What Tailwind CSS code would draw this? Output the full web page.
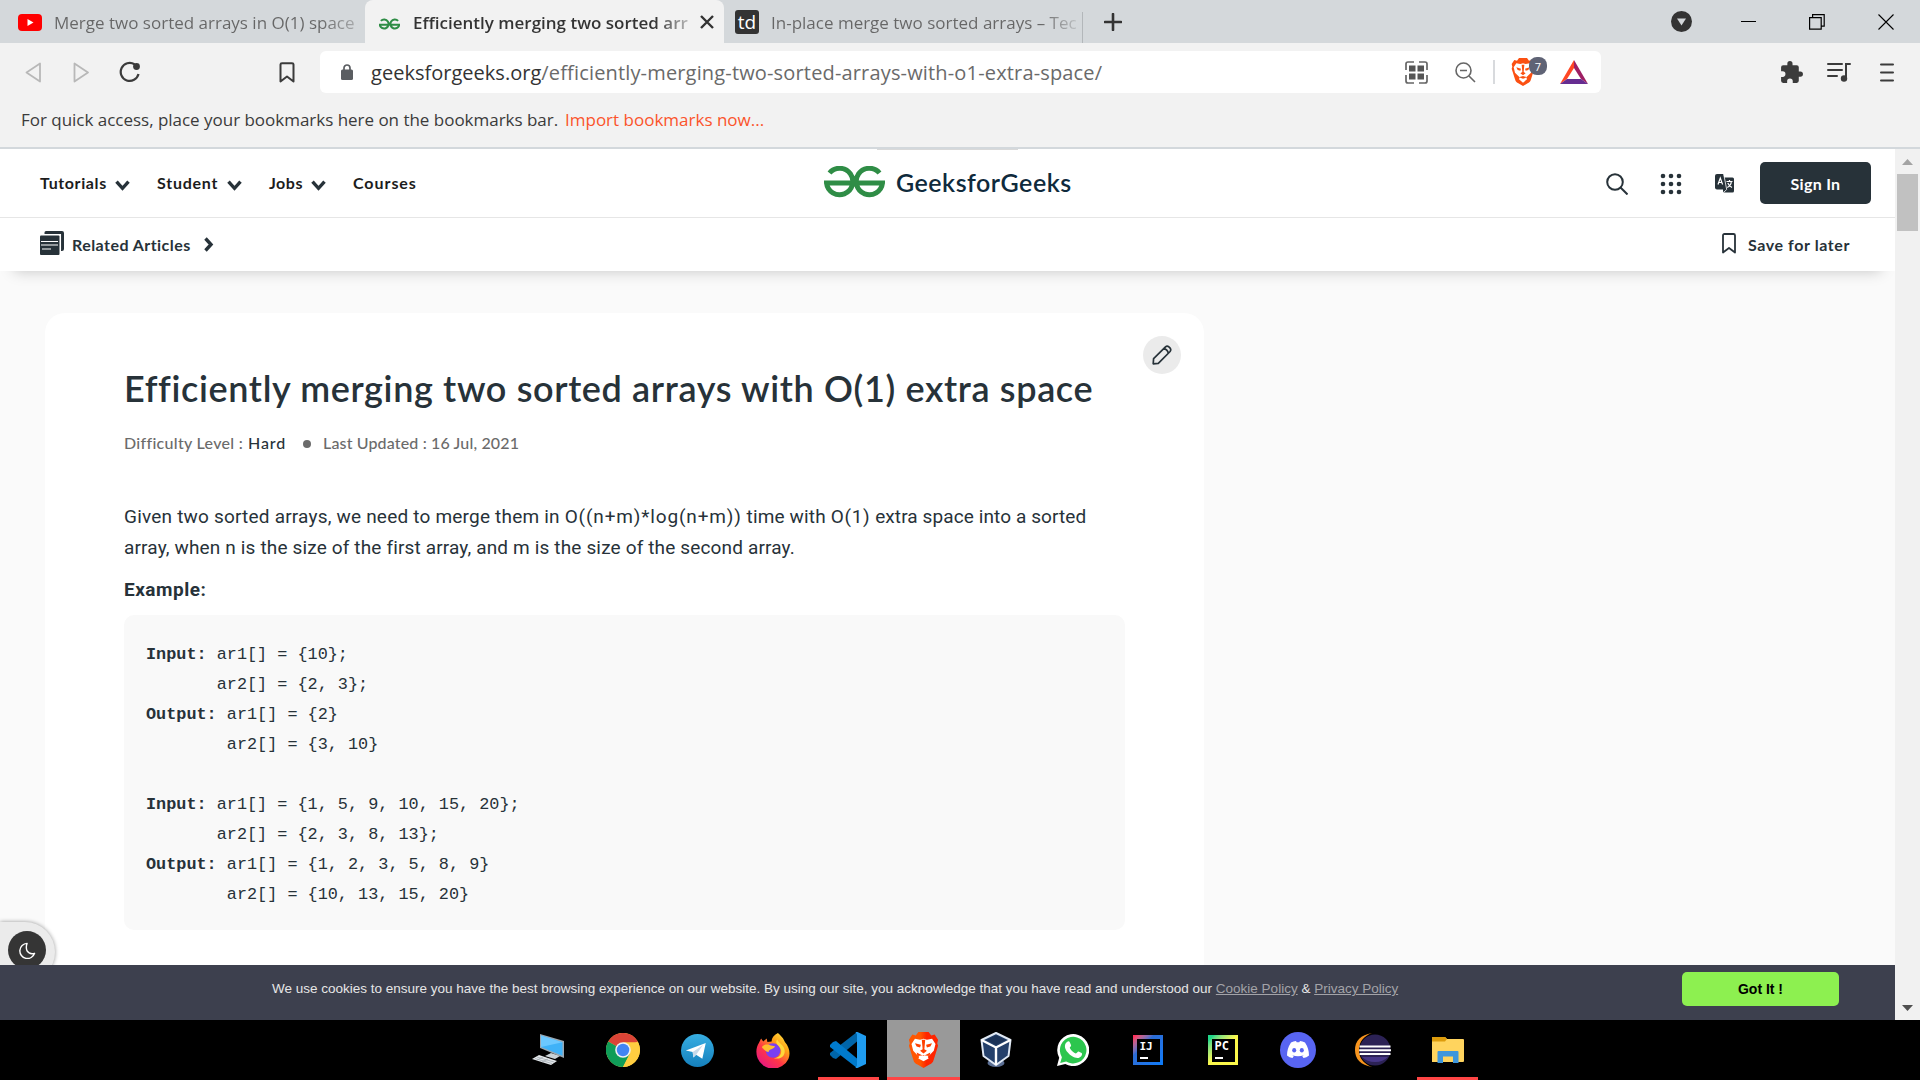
<!DOCTYPE html>
<html lang="en">
<head>
<meta charset="utf-8">
<title>Efficiently merging two sorted arrays with O(1) extra space</title>
<script src="https://cdn.jsdelivr.net/npm/@tailwindcss/browser@4"></script>
</head>
<body class="flex h-[1080px] w-[1920px] flex-col overflow-hidden bg-[#fafafa] font-['Open_Sans',sans-serif]">

<!-- Tab strip -->
<div class="flex h-[43px] shrink-0 bg-[#d4d8db] text-[17px] leading-[43px] whitespace-nowrap">
  <div class="flex h-11 w-[365px] items-center pl-[18px]">
    <svg class="h-[17px] w-6 shrink-0" viewBox="0 0 24 17"><rect width="24" height="17" rx="4" fill="#f00"/><path d="M9.500 5v7l6-3.500z" fill="#fff"/></svg>
    <span class="ml-3 w-[302px] overflow-hidden bg-linear-to-r from-[#666] from-88% to-[#666]/40 bg-clip-text text-transparent">Merge two sorted arrays in O(1) space</span>
  </div>
  <div class="flex h-11 w-[359px] items-center rounded-t-lg bg-[#f2f2f2] pl-[14px]">
    <svg class="mt-[3px] h-3 w-[21px] shrink-0" viewBox="0 0 61 32" fill="none" stroke="#2f8d46" stroke-width="6"><path d="M55.500 7A13 13 0 1 0 59 18H31M5.500 7A13 13 0 1 1 2 18H30"/></svg>
    <span class="ml-[13px] w-[275px] overflow-hidden bg-linear-to-r from-[#333] from-88% to-[#333]/30 bg-clip-text font-semibold text-transparent">Efficiently merging two sorted arr</span>
    <svg class="ml-3 size-[14px]" viewBox="0 0 14 14" stroke="#333" stroke-width="2.400"><path d="M1 1l12 12M13 1L1 13"/></svg>
  </div>
  <div class="flex h-11 w-[359px] items-center pl-[11px]">
    <span class="flex h-6 w-6 items-center justify-center rounded-[3px] bg-[#333] text-[19px] leading-6 text-white">td</span>
    <span class="ml-3 w-[306px] overflow-hidden bg-linear-to-r from-[#666] from-88% to-[#666]/20 bg-clip-text text-transparent">In-place merge two sorted arrays – Tec</span>
    <span class="ml-[5px] h-8 w-px self-end bg-[#b3b7ba]"></span>
  </div>
  <div class="flex flex-1 items-center pl-[21px]">
    <svg class="mt-px size-[18px]" viewBox="0 0 18 18" stroke="#333" stroke-width="2.600" stroke-linecap="round"><path d="M9 1v16M1 9h16"/></svg>
    <svg class="ml-[549px] size-[21px]" viewBox="0 0 21 21"><circle cx="10.500" cy="10.500" r="10.500" fill="#333"/><path d="M6 7.500h9l-4.500 7z" fill="#d4d8db"/></svg>
    <svg class="ml-[49px] size-[15px]" viewBox="0 0 15 15" stroke="#000"><path d="M0 7.500h15"/></svg>
    <svg class="ml-[53px] size-4" viewBox="0 0 16 16" fill="none" stroke="#000" stroke-width="1.200"><path d="M.6 3.600h11.600v11.600H.6zM3.600 3.600V.6h11.600v11.600h-3"/></svg>
    <svg class="ml-[53px] size-4" viewBox="0 0 16 16" stroke="#000" stroke-width="1.100"><path d="M.5.5l15 15M15.500.5l-15 15"/></svg>
  </div>
</div>

<!-- Toolbar -->
<div class="flex h-[58px] shrink-0 items-center bg-[#f2f2f2] pl-[25px]">
  <svg class="h-[21px] w-4" viewBox="0 0 16 21" fill="none" stroke="#b8b8b8" stroke-width="1.800" stroke-linejoin="round"><path d="M15 1.500v18L1.500 10.500z"/></svg>
  <svg class="ml-8 h-[21px] w-4" viewBox="0 0 16 21" fill="none" stroke="#b8b8b8" stroke-width="1.800" stroke-linejoin="round"><path d="M1.500 1.500v18L15 10.500z"/></svg>
  <svg class="ml-[30px] size-[22px]" viewBox="0 0 22 22" fill="none" stroke="#3b3b3b" stroke-width="2.200"><path d="M15.500 3.300A9 9 0 1 0 19.500 13"/><circle cx="17.500" cy="5.500" r="3.400" fill="#3b3b3b" stroke="none"/></svg>
  <svg class="ml-[138px] h-[21px] w-4" viewBox="0 0 16 21" fill="none" stroke="#3b3b3b" stroke-width="2" stroke-linejoin="round"><path d="M1.500 2.500Q1.500 1.200 3 1.200h10q1.500 0 1.500 1.300v17L8 14.500l-6.500 5z"/></svg>
  <div class="ml-[25px] flex h-[42px] w-[1281px] items-center rounded-md bg-white pl-[21px]">
    <svg class="h-4 w-3" viewBox="0 0 12 16" fill="none"><path d="M3 7V4a3 3 0 0 1 6 0v3" stroke="#5a5d61" stroke-width="1.700"/><rect y="5.500" width="12" height="10.500" rx="1.500" fill="#5a5d61"/></svg>
    <span class="mt-0.5 ml-[18px] w-[732px] text-[20px] leading-none tracking-[0.16px] whitespace-nowrap text-[#6a6a6a]"><span class="tracking-[0.02px] text-[#333]">geeksforgeeks.org</span>/efficiently-merging-two-sorted-arrays-with-o1-extra-space/</span>
    <svg class="ml-[302px] size-[23px]" viewBox="0 0 23 23" fill="none" stroke="#666" stroke-width="1.700"><path d="M1 9V3q0-2 2-2h6M14 1h6q2 0 2 2v6M22 14v6q0 2-2 2h-6M9 22H3q-2 0-2-2v-6"/><path d="M4 4.500h6.500v6H4zM12.500 4.500H19v6h-6.500zM4 12.500h6.500v6H4zM12.500 12.500H19v6h-6.500z" fill="#555" stroke="none"/></svg>
    <svg class="ml-[27px] size-[21px]" viewBox="0 0 21 21" fill="none" stroke="#666" stroke-width="1.600"><circle cx="8.500" cy="8.500" r="7.500"/><path d="M14 14l6 6M5 8.500h7"/></svg>
    <span class="ml-[17px] h-6 w-0.5 bg-[#d8dadd]"></span>
    <div class="relative ml-4 h-7 w-6">
      <svg class="h-7 w-6" viewBox="0 0 36 42"><path d="M9 4l3-4h12l3 4 4-1 4 6-1 4 1 3-5 16c-1 4-3 5-5 6l-7 4-7-4c-2-1-4-2-5-6L1 16l1-3-1-4 4-6z" fill="#fb5012"/><path d="M8 8l6 1 4-1 4 1 6-1 4 6-2 8-5 5-2 2 1 3-6 5-6-5 1-3-2-2-5-5-2-8z" fill="#fff"/><path d="M8 14l7 2-1 3-4-1zM28 14l-7 2 1 3 4-1zM16 10h4l-1 11 3 2-4 3-4-3 3-2zM12 29l6-2 6 2-6 2z" fill="#fb5012"/></svg>
      <span class="absolute -top-px left-[18px] flex h-[18px] w-[18px] items-center justify-center rounded-lg bg-[#5f6375] text-[11px] leading-none text-white">7</span>
    </div>
    <svg class="ml-[25px] h-6 w-7" viewBox="0 0 28 24"><path d="M14 0L0 24l7-5 7-11z" fill="#ff4724"/><path d="M14 0l14 24-7-5-7-11z" fill="#9e1f63"/><path d="M0 24h28l-7-5H7z" fill="#662d91"/></svg>
  </div>
  <svg class="ml-[178px] size-[25px]" viewBox="0 0 24 24" fill="#3b3b3b"><path d="M20.500 11H19V7a2 2 0 0 0-2-2h-4V3.500a2.500 2.500 0 0 0-5 0V5H4a2 2 0 0 0-2 2v3.800h1.500a2.700 2.700 0 0 1 0 5.400H2V20a2 2 0 0 0 2 2h3.800v-1.500a2.700 2.700 0 0 1 5.400 0V22H17a2 2 0 0 0 2-2v-4h1.500a2.500 2.500 0 0 0 0-5z"/></svg>
  <svg class="ml-[23px] h-5 w-6" viewBox="0 0 24 20" fill="none" stroke="#3b3b3b" stroke-width="2" stroke-linecap="round"><path d="M1 2h14M1 8h14M1 14h9M19 16V2h4"/><circle cx="17" cy="16.500" r="3.200" fill="#3b3b3b" stroke="none"/></svg>
  <svg class="ml-[29px] h-[19px] w-3.5" viewBox="0 0 14 19" stroke="#3b3b3b" stroke-width="2" stroke-linecap="round"><path d="M1 1.500h12M1 9.500h12M1 17.500h12"/></svg>
</div>

<!-- Bookmarks bar -->
<div class="flex h-12 shrink-0 border-b-2 border-[#d3d8dc] bg-[#f2f2f2] pl-[21px] text-[17px] leading-[38px] whitespace-nowrap">
  <span class="w-[544px] tracking-[-0.02px] text-[#3b3b3b]">For quick access, place your bookmarks here on the bookmarks bar.</span>
  <span class="text-[#fb542b]">Import bookmarks now...</span>
</div>

<!-- Page viewport with scrollbar -->
<div class="flex h-[871px] shrink-0">
  <div class="relative flex h-full w-[1895px] flex-col overflow-hidden text-[#273239]">
    <div class="absolute top-0 left-[877px] z-20 h-px w-[141px] bg-[#d9d9d9]"></div>

    <header class="z-10 shrink-0 bg-white font-['Lato',sans-serif] shadow-[0_14px_14px_-14px_rgba(0,0,0,0.22)]">
      <div class="flex h-[69px] items-center border-b border-[#e6e6e6] pl-10 text-[16px] font-bold text-[#1c1c1c]">
        <div class="flex w-[117px] items-center"><span class="w-[75px] tracking-[0.6px]">Tutorials</span><svg class="mt-1 h-[11px] w-[15px]" viewBox="0 0 15 11" fill="none" stroke="#273239" stroke-width="3.400"><path d="M1.500 1.700l6 6.600 6-6.600"/></svg></div>
        <div class="flex w-[112px] items-center"><span class="w-[70px] tracking-[0.75px]">Student</span><svg class="mt-1 h-[11px] w-[15px]" viewBox="0 0 15 11" fill="none" stroke="#273239" stroke-width="3.400"><path d="M1.500 1.700l6 6.600 6-6.600"/></svg></div>
        <div class="flex w-[84px] items-center"><span class="w-[42px] tracking-[0.5px]">Jobs</span><svg class="mt-1 h-[11px] w-[15px]" viewBox="0 0 15 11" fill="none" stroke="#273239" stroke-width="3.400"><path d="M1.500 1.700l6 6.600 6-6.600"/></svg></div>
        <span class="w-[471px] tracking-[0.95px]">Courses</span>
        <svg class="h-8 w-[61px] -translate-y-px" viewBox="0 0 61 32" fill="none" stroke="#2f8d46" stroke-width="5"><path d="M55.500 7A13.200 13.200 0 1 0 58.500 17H31M5.500 7A13.200 13.200 0 1 1 2.500 17H30"/></svg>
        <span class="ml-[11px] w-[710px] text-[25px] font-semibold tracking-[0.5px] text-[#0f2a3c]">GeeksforGeeks</span>
        <svg class="mt-px size-[22px]" viewBox="0 0 22 22" fill="none" stroke="#273239" stroke-width="2"><circle cx="9" cy="9" r="7.800"/><path d="M14.500 14.500l7 7"/></svg>
        <svg class="mt-0.5 ml-8 size-[22px]" viewBox="0 0 22 22" fill="#273239"><circle cx="3" cy="3" r="2.300"/><circle cx="11" cy="3" r="2.300"/><circle cx="19" cy="3" r="2.300"/><circle cx="3" cy="11" r="2.300"/><circle cx="11" cy="11" r="2.300"/><circle cx="19" cy="11" r="2.300"/><circle cx="3" cy="19" r="2.300"/><circle cx="11" cy="19" r="2.300"/><circle cx="19" cy="19" r="2.300"/></svg>
        <svg class="mt-px ml-[33px] h-[19px] w-[19px]" viewBox="0 0 19 19"><rect x="8" y="3.500" width="11" height="15" rx="1.500" fill="#273239"/><path d="M2 0h6.500l3 15.500H2q-2 0-2-2V2q0-2 2-2z" fill="#273239"/><path d="M8.700 0l3 15.500-3 2.800" fill="none" stroke="#fff" stroke-width=".8"/><path d="M3 10.500l2.300-6.500L7.600 10.500M3.800 8.500h3M11.500 7.500h6M14.500 6v1.500M12.300 13.500q3.800-2 4-6M12.800 9q1.500 3.500 4.200 4.500" fill="none" stroke="#fff" stroke-width="1.200"/></svg>
        <span class="ml-[26px] flex h-[42px] w-[111px] items-center justify-center rounded-[5px] bg-[#273239] pt-px tracking-[0.3px] text-white">Sign In</span>
      </div>
      <div class="flex h-[53px] items-center pl-10 text-[16px] font-bold">
        <svg class="-mt-1 size-6" viewBox="0 0 24 24"><path d="M6 0h16q2 0 2 2v16q0 2-2 2h-1V5q0-2-2-2H4.500V1.500Q4.500 0 6 0z" fill="#273239"/><rect y="4.500" width="19.500" height="19.500" rx="1" fill="#273239"/><path d="M5 3.500h15.500V19M1 10.500h17M1 14h17M2 18h9" fill="none" stroke="#fff" stroke-width="1.100"/></svg>
        <span class="ml-2 w-[132px] tracking-[0.45px]">Related Articles</span>
        <svg class="h-[15px] w-[10px]" viewBox="0 0 10 15" fill="none" stroke="#273239" stroke-width="3.400"><path d="M1.500 1.500l5.500 6-5.500 6"/></svg>
        <svg class="-mt-0.5 ml-[1508px] h-[21px] w-[14px]" viewBox="0 0 14 21" fill="none" stroke="#273239" stroke-width="1.800" stroke-linejoin="round"><path d="M1 2.500Q1 1 2.500 1h9Q13 1 13 2.500v17l-6-4.500-6 4.500z"/></svg>
        <span class="ml-3 tracking-[0.58px] whitespace-nowrap">Save for later</span>
      </div>
    </header>

    <main class="relative mt-[42px] ml-[45px] h-[680px] w-[1159px] shrink-0 rounded-t-[20px] bg-white pl-[79px]">
      <span class="absolute top-[23px] right-[23px] flex size-[38px] items-center justify-center rounded-full bg-[#ebebeb]">
        <svg class="size-5" viewBox="0 0 20 20" fill="none" stroke="#273239" stroke-width="1.700" stroke-linejoin="round"><path d="M1.200 18.800l.4-5.200L13.500 1.800q1.600-1.300 3.400.1l1.200 1.200q1.300 1.800 0 3.400L6.300 18.400zM11.800 3.800q3.400 0 4.500 4.300"/></svg>
      </span>
      <h1 class="pt-[52px] font-['Lato',sans-serif] text-[36px] leading-[46px] font-semibold tracking-[0.64px] whitespace-nowrap">Efficiently merging two sorted arrays with O(1) extra space</h1>
      <div class="mt-[20px] flex items-center font-['Lato',sans-serif] text-[16px] leading-6 font-medium text-[#6b6b6b]">
        <span class="w-[124px] tracking-[0.3px]">Difficulty Level :</span>
        <span class="w-[55px] tracking-[0.9px] text-[#273239]">Hard</span>
        <span class="mt-px mr-[12px] size-2 rounded-full bg-[#6b6b6b]"></span>
        <span class="tracking-[0.15px]">Last Updated : 16 Jul, 2021</span>
      </div>
      <div class="mt-[46px] font-['Roboto',sans-serif] text-[19px] leading-[31px] tracking-[0.15px] whitespace-nowrap">
        <p><span class="tracking-[0.2px]">Given two sorted arrays, we need to merge them in </span><span class="tracking-[0.85px]">O((n+m)*log(n+m))</span> time with <span class="tracking-[0.7px]">O(1)</span><span class="tracking-[0.1px]"> extra space into a sorted</span><br>array, when n is the size of the first array, and m is the size of the second array.</p>
        <p class="mt-[11px] font-bold tracking-[0.5px]">Example:</p>
      </div>
      <pre class="mt-[10px] h-[315px] w-[1001px] rounded-[10px] bg-[#f9f9f9] pt-[25px] pl-[22px] font-['Liberation_Mono',monospace] text-[16.83px] leading-[30px]"><b>Input:</b> ar1[] = {10};
       ar2[] = {2, 3};
<b>Output:</b> ar1[] = {2}
        ar2[] = {3, 10}

<b>Input:</b> ar1[] = {1, 5, 9, 10, 15, 20};
       ar2[] = {2, 3, 8, 13};
<b>Output:</b> ar1[] = {1, 2, 3, 5, 8, 9}
        ar2[] = {10, 13, 15, 20}</pre>
    </main>

    <!-- Dark mode toggle -->
    <div class="absolute top-[773px] left-0 flex h-[60px] w-[55px] justify-center rounded-r-[30px] bg-[#ebebeb] pt-[9px] pr-px shadow-[0_0_4px_rgba(0,0,0,0.4)]">
      <span class="flex size-[38px] items-center justify-center rounded-full bg-[#353535]">
        <svg class="size-[17px]" viewBox="0 0 18 18" fill="none" stroke="#fff" stroke-width="1.500" stroke-linejoin="round"><path d="M8.500 1.500A8 8 0 1 0 16.500 12Q11 13.500 8.500 9.500 7 5.500 8.500 1.500z"/></svg>
      </span>
    </div>

    <!-- Cookie notice -->
    <div class="absolute bottom-0 left-0 z-20 flex h-[55px] w-[1895px] bg-[#3d404e] pl-[272px] font-['Liberation_Sans',sans-serif] text-[13.500px] leading-[48px] whitespace-nowrap text-[#e6e6e6]">
      <span class="w-[1410px]">We use cookies to ensure you have the best browsing experience on our website. By using our site, you acknowledge that you have read and understood our <span class="text-[#a3a3a8] underline">Cookie Policy</span> &amp; <span class="text-[#a3a3a8] underline">Privacy Policy</span></span>
      <span class="mt-[7px] h-[34px] w-[157px] rounded-[5px] bg-[#8df050] text-center text-[14px] leading-[34px] font-bold text-black">Got It !</span>
    </div>
  </div>

  <div class="flex w-[25px] flex-col items-center bg-[#f1f1f1]">
    <svg class="mt-[10px] h-[6px] w-[11px]" viewBox="0 0 11 6"><path d="M0 6L5.500 0 11 6z" fill="#a3a3a3"/></svg>
    <div class="mt-[9px] h-[57px] w-[21px] bg-[#c1c1c1]"></div>
    <svg class="mt-[774px] h-[6px] w-[11px]" viewBox="0 0 11 6"><path d="M0 0h11L5.500 6z" fill="#505050"/></svg>
  </div>
</div>

<!-- Taskbar -->
<div class="flex h-[60px] shrink-0 bg-black pl-[510px]">
  <div class="flex w-[75px] items-center justify-center">
    <svg class="h-8 w-8" viewBox="0 0 32 32"><path d="M8 0l24 7v17L8 14z" fill="#9aa7b1"/><path d="M9 1.500l21.500 6.700v13.600L9 13z" fill="#3fb2f8"/><path d="M9 1.500l21.500 6.700L9 13z" fill="#6cc8ff"/><path d="M19 19l9 3-5 3-10-3z" fill="#c9d1d6"/><path d="M7 21l18 6-6 4L0 25z" fill="#e4e8eb"/><path d="M5 23l17 5M3 24.500l17 5M11 23l-6 3M16 25l-6 3" stroke="#9aa4ab" stroke-width=".7"/></svg>
  </div>
  <div class="flex w-[75px] items-center justify-center">
    <svg class="size-[34px]" viewBox="0 0 48 48"><circle cx="24" cy="24" r="24" fill="#ffcd40"/><path d="M24 24L3.200 12A24 24 0 0 1 44.800 12z" fill="#db4437"/><path d="M3.200 12A24 24 0 0 0 24 48l9.500-18.500L24 24z" fill="#0f9d58"/><path d="M24 13h21.300A24 24 0 0 1 24 48l9.500-18.500z" fill="#ffcd40"/><circle cx="24" cy="24" r="11" fill="#f1f1f1"/><circle cx="24" cy="24" r="8.800" fill="#4285f4"/></svg>
  </div>
  <div class="flex w-[75px] items-center justify-center">
    <svg class="size-[33px]" viewBox="0 0 48 48"><defs><linearGradient id="tg" x1="0" y1="0" x2="0" y2="1"><stop stop-color="#37aee2"/><stop offset="1" stop-color="#1580bd"/></linearGradient></defs><circle cx="24" cy="24" r="24" fill="url(#tg)"/><path d="M7 24L36 13l-5 23-9-6-4 4-1-8z" fill="#fff"/><path d="M17 26l15-10-10 14-4 4z" fill="#c8daea"/></svg>
  </div>
  <div class="flex w-[75px] items-center justify-center">
    <svg class="h-[35px] w-[34px]" viewBox="0 0 48 50"><defs><linearGradient id="fx" x1="1" y1="0" x2=".2" y2="1"><stop stop-color="#fff44f"/><stop offset=".35" stop-color="#ffa216"/><stop offset=".65" stop-color="#ff3647"/><stop offset="1" stop-color="#e31587"/></linearGradient></defs><path d="M31 0c7 6 9 10 10 13 7 8 8 17 5 24a24 24 0 0 1-44-1C-1 28 0 20 4 14l3-6 3 4 5-4 1 5 6-1c0-5 3-9 9-12z" fill="url(#fx)"/><circle cx="24" cy="25" r="10.500" fill="#7a3ff2"/><path d="M8 20c4-5 10-4 13-2l6 1c-3 5-8 4-9 7 1 3-6 0-10-6z" fill="#ffbd2f"/><path d="M30 9c-4 6 2 8 5 14 3 8-4 13-10 13 12 3 18-6 15-14-2-6-8-7-10-13z" fill="#ffd93b"/></svg>
  </div>
  <div class="relative flex w-[75px] items-center justify-center">
    <svg class="size-9" viewBox="0 0 36 36"><path d="M27 0v9.500L6 27l-3-1-3-3v-2z" fill="#0065a9"/><path d="M27 36v-9.500L6 9 3 10l-3 3v2z" fill="#007acc"/><path d="M25.500 0q1-.5 2 0L36 4v28l-8.500 4q-1 .5-2-.5l1.500-2V2.500z" fill="#1f9cf0"/></svg>
    <span class="absolute bottom-0 left-[8px] h-[3px] w-[61px] bg-[#ff4545]"></span>
  </div>
  <div class="relative ml-0.5 flex w-[73px] items-center justify-center bg-[#999]">
    <svg class="h-9 w-[31px]" viewBox="0 0 36 42"><defs><linearGradient id="br"><stop offset=".4" stop-color="#ff5601"/><stop offset=".6" stop-color="#ff2500"/></linearGradient></defs><path d="M9 4l3-4h12l3 4 4-1 4 6-1 4 1 3-5 16c-1 4-3 5-5 6l-7 4-7-4c-2-1-4-2-5-6L1 16l1-3-1-4 4-6z" fill="url(#br)"/><path d="M8 8l6 1 4-1 4 1 6-1 4 6-2 8-5 5-2 2 1 2-6 3-6-3 1-2-2-2-5-5-2-8z" fill="#fff"/><path d="M8 13l7 2-1 3-4-1zM28 13l-7 2 1 3 4-1zM16 9h4l-1 11 3 2-4 3-4-3 3-2zM10 24l8 4 8-4-1 4-7-1-7 1z" fill="#ff4000"/></svg>
    <span class="absolute inset-x-0 bottom-0 h-[3px] bg-[#ff4545]"></span>
  </div>
  <div class="flex w-[75px] items-center justify-center pr-[3px]">
    <svg class="h-9 w-8" viewBox="0 0 32 36"><ellipse cx="16" cy="31" rx="8.500" ry="4" fill="#5b6f94"/><path d="M1.500 8L16 1l14.500 7-2 16L16 33 3.500 24z" fill="#24406b" stroke="#dfe8f4" stroke-width="2" stroke-linejoin="round"/><path d="M1.500 8L16 15.500 30.500 8M16 15.500V33" fill="none" stroke="#fff" stroke-width="2.400"/><path d="M6 8l10-4.700L26 8l-10 5z" fill="#1b3358"/></svg>
  </div>
  <div class="flex w-[75px] items-center justify-center pl-px">
    <svg class="size-8" viewBox="0 0 32 32"><path d="M0 32l2.200-8.200A16 16 0 1 1 8.300 30z" fill="#fff"/><path d="M3.200 29l1.700-5.800a13.300 13.300 0 1 1 4.200 4.200z" fill="#2cc64e"/><path d="M10 8c1-1 2.300-1 2.800.2l1.300 3c.3 1-1.500 2-1.300 2.700 1.500 3 4 4.800 6 5.500 1 .2 1.800-2 2.800-1.800l3 1.500c1.200 1-.2 4-2.500 4.700-4 1-8.600-2-11-5-3.400-3.500-4.500-8-1.100-10.800z" fill="#fff"/></svg>
  </div>
  <div class="flex w-[75px] items-center justify-center pl-[1px]">
    <div class="flex size-[30px] items-center justify-center bg-linear-135 from-[#fe315d] from-5% via-[#2b6cd4] via-35% to-[#087cfa]"><div class="flex h-[23px] w-[23px] flex-col justify-between bg-black px-[3px] pt-px pb-[3px] font-['DejaVu_Sans_Mono',monospace] text-[11px] leading-[13px] font-bold text-white"><span>IJ</span><span class="h-0.5 w-2 bg-white"></span></div></div>
  </div>
  <div class="flex w-[75px] items-center justify-center pl-[1px]">
    <div class="flex size-[30px] items-center justify-center bg-linear-135 from-[#21d789] from-10% to-[#fcf84a] to-50%"><div class="flex h-[23px] w-[23px] flex-col justify-between bg-black px-[3px] pt-px pb-[3px] font-['DejaVu_Sans_Mono',monospace] text-[12px] leading-[13px] font-bold text-white"><span>PC</span><span class="h-0.5 w-2 bg-white"></span></div></div>
  </div>
  <div class="flex w-[75px] items-center justify-center">
    <svg class="size-9" viewBox="0 0 36 36"><circle cx="18" cy="18" r="18" fill="#5865f2"/><path d="M11 10.500q2.500-1.200 5-1.500l.7 1.300h2.600L20 9q2.500.3 5 1.500 4 6 4 13-2.500 2-5.500 2.500l-1.300-2q1-.4 1.800-1-6 2.500-12 0 .8.600 1.800 1l-1.300 2Q9.500 25.500 7 23.500q0-7 4-13z" fill="#fff"/><ellipse cx="14.200" cy="18.200" rx="2" ry="2.200" fill="#5865f2"/><ellipse cx="21.800" cy="18.200" rx="2" ry="2.200" fill="#5865f2"/></svg>
  </div>
  <div class="flex w-[75px] items-center justify-center">
    <svg class="h-[34px] w-9" viewBox="0 0 36 34"><path d="M17 0Q0 3 0 17Q0 31 17 34Q4 29 4 17Q4 5 17 0z" fill="#f7941e"/><circle cx="20" cy="17" r="15.500" fill="#2c2255"/><path d="M7 24h26q-5 5-13 5t-13-5z" fill="#473788"/><path d="M4.500 13.500h31M4.200 17.200h32M4.500 21h31" stroke="#fff" stroke-width="2"/></svg>
  </div>
  <div class="relative flex w-[75px] items-center justify-center">
    <svg class="h-[26px] w-8" viewBox="0 0 32 26"><path d="M0 1q0-1 1-1h12l2 2h16q1 0 1 1v21q0 1-1 1H0z" fill="#ffd45e"/><path d="M0 1q0-1 1-1h12l2 2-2 2.500H0z" fill="#dd9c0c"/><path d="M5.500 26V15q0-1 1-1h19q1 0 1 1v11h-5.500v-6.500H11V26z" fill="#3e96dc"/></svg>
    <span class="absolute bottom-0 left-[7px] h-[3px] w-[61px] bg-[#ff4545]"></span>
  </div>
</div>
</body>
</html>
